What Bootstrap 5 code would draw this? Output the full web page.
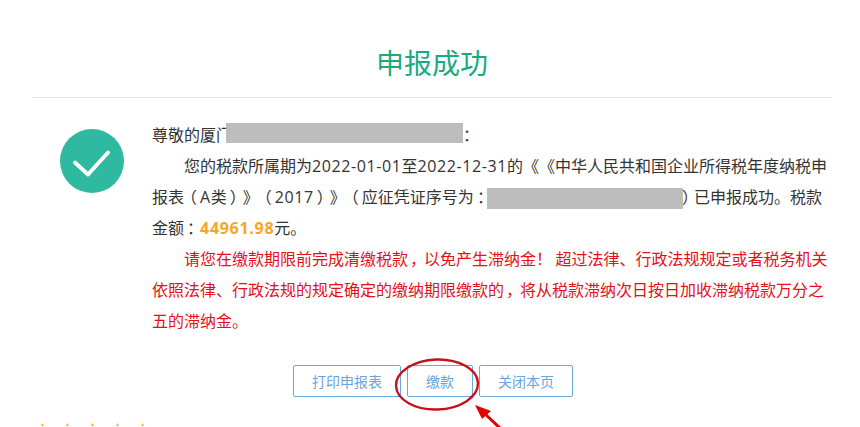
<!DOCTYPE html>
<html lang="zh-CN">
<head>
<meta charset="utf-8">
<link href="https://cdn.jsdelivr.net/npm/bootstrap@5.3.0/dist/css/bootstrap.min.css" rel="stylesheet">
<style>
html,body{height:427px;overflow:hidden;background:#fff}
body{font-family:"Noto Sans CJK SC",sans-serif;color:#333;font-size:16px;position:relative;text-spacing-trim:space-all}
.sheet{width:800px;margin-left:32px}
.headline{font-size:28px;line-height:40px;color:#19aa82;text-align:center;padding:42px 0 15px;margin:0;border-bottom:1px solid #e4e4e4;font-weight:400}
.body-area{padding-top:21px}
.tick{width:64px;height:64px;flex:none;margin:10px 0 0 28px}
.msg{margin-left:28px;width:682px;line-height:31px}
.msg p{margin:0}
.ind{text-indent:32px}
.redact{display:inline-block;background:#bdbdbd;height:20px}
.r-a{width:237px;margin:-5px -3px -5px -6px;vertical-align:3px}
.r-b{width:196px;height:21px;margin:-5px -3px;vertical-align:-1px}
.lat,.cen,.cmm,.amount{line-height:1}
.lat{font-family:"Open Sans","Noto Sans CJK SC",sans-serif;letter-spacing:.6px}
.cen{font-family:"Noto Sans CJK TC",sans-serif;margin-left:3px;margin-right:-3px}
.cmm{font-family:"Noto Sans CJK TC",sans-serif;margin-left:2px;margin-right:-2px}
.po{margin-left:-3px;margin-right:3px}
.pc{margin-left:3px;margin-right:-3px}
.pd{margin-left:2px;margin-right:-4px}
.amount{font-family:"Open Sans",sans-serif;color:#f5a623;font-weight:700;letter-spacing:.7px}
.warn{color:#e6101a}
.actions{margin-top:29px;gap:6px;padding-left:261px}
.act{font-size:14px;line-height:20px;color:#6ba3dc;border:1px solid #6aa9dc;border-radius:2px;background:#fff;height:32px;padding:5px 18px;text-align:center}
.stars{margin:25px 0 0 -2px;height:4px;overflow:hidden}
.stars svg{width:25px;height:25px;flex:none}
.mark-over{position:absolute;left:0;top:0;pointer-events:none}
</style>
</head>
<body>
<div class="sheet">
  <h1 class="headline">申报成功</h1>
  <div class="body-area d-flex">
    <svg class="tick" viewBox="0 0 64 64"><circle cx="32" cy="32" r="32" fill="#2fb9a0"/><path d="M15 33.5 L28 45.5 L48 23.5" fill="none" stroke="#fff" stroke-width="4" stroke-linecap="round" stroke-linejoin="round"/></svg>
    <div class="msg">
      <p>尊敬的厦门<span class="redact r-a"></span><span class="cen">：</span></p>
      <p class="ind">您的税款所属期为<span class="lat">2022-01-01</span>至<span class="lat">2022-12-31</span>的《《中华人民共和国企业所得税年度纳税申报表<span class="po">（</span><span class="lat">A</span>类<span class="pc">）</span>》<span class="po">（</span><span class="lat">2017</span><span class="pc">）</span>》<span class="po">（</span>应征凭证序号为<span class="cen">：</span><span class="redact r-b"></span><span class="pd">）</span>已申报成功。税款金额<span class="cen">：</span><span class="amount">44961.98</span>元。</p>
      <p class="ind warn">请您在缴款期限前完成清缴税款<span class="cmm">，</span>以免产生滞纳金！ 超过法律、行政法规规定或者税务机关依照法律、行政法规的规定确定的缴纳期限缴款的<span class="cmm">，</span>将从税款滞纳次日按日加收滞纳税款万分之五的滞纳金。</p>
    </div>
  </div>
  <div class="actions d-flex">
    <button type="button" class="act">打印申报表</button>
    <button type="button" class="act">缴款</button>
    <button type="button" class="act">关闭本页</button>
  </div>
  <div class="stars d-flex">
    <svg viewBox="0 0 24 24"><path fill="#f5a623" d="M12 1l3.4 7.2 7.6 1-5.6 5.4 1.4 7.8-6.8-3.8-6.8 3.8 1.4-7.8L1 9.2l7.6-1z"/></svg>
    <svg viewBox="0 0 24 24"><path fill="#f5a623" d="M12 1l3.4 7.2 7.6 1-5.6 5.4 1.4 7.8-6.8-3.8-6.8 3.8 1.4-7.8L1 9.2l7.6-1z"/></svg>
    <svg viewBox="0 0 24 24"><path fill="#f5a623" d="M12 1l3.4 7.2 7.6 1-5.6 5.4 1.4 7.8-6.8-3.8-6.8 3.8 1.4-7.8L1 9.2l7.6-1z"/></svg>
    <svg viewBox="0 0 24 24"><path fill="#f5a623" d="M12 1l3.4 7.2 7.6 1-5.6 5.4 1.4 7.8-6.8-3.8-6.8 3.8 1.4-7.8L1 9.2l7.6-1z"/></svg>
    <svg viewBox="0 0 24 24"><path fill="#f5a623" d="M12 1l3.4 7.2 7.6 1-5.6 5.4 1.4 7.8-6.8-3.8-6.8 3.8 1.4-7.8L1 9.2l7.6-1z"/></svg>
  </div>
</div>
<svg class="mark-over" width="860" height="427" viewBox="0 0 860 427">
  <ellipse cx="437" cy="384.5" rx="41" ry="25" fill="none" stroke="#c8101c" stroke-width="2.4" transform="rotate(-2 437 384.5)"/>
  <path d="M502 430 L484 413" stroke="#e00000" stroke-width="3" fill="none"/>
  <path d="M475 405 L491 411 L482 419 Z" fill="#e00000"/>
</svg>
</body>
</html>
